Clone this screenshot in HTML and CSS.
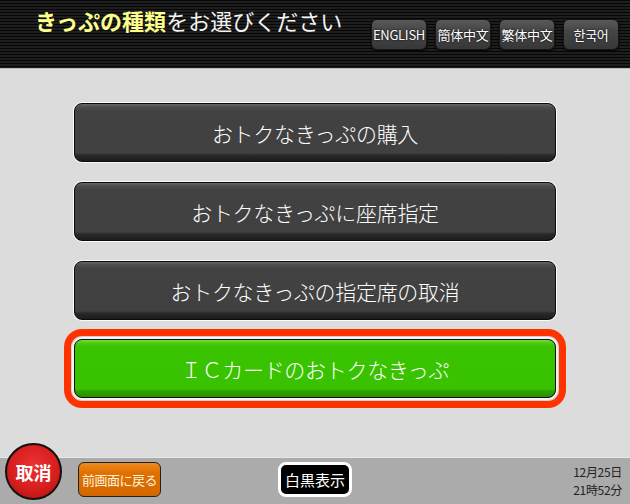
FILE: index.html
```html
<!DOCTYPE html>
<html lang="ja">
<head>
    <meta charset="UTF-8">
    <meta name="viewport" content="width=device-width, initial-scale=1.0">
    <title>きっぷの種類をお選びください</title>
    <link rel="stylesheet" href="styles.css">
</head>
<body>
    <div class="screen">
        <header class="header">
            <h1 class="title"><span class="title-em">きっぷの種類</span>をお選びください</h1>
            <div class="langs">
                <button class="lang">ENGLISH</button>
                <button class="lang">簡体中文</button>
                <button class="lang">繁体中文</button>
                <button class="lang">한국어</button>
            </div>
        </header>

        <main class="menu">
            <button class="menu-btn">おトクなきっぷの購入</button>
            <button class="menu-btn">おトクなきっぷに座席指定</button>
            <button class="menu-btn">おトクなきっぷの指定席の取消</button>
            <button class="menu-btn menu-btn-green">ＩＣカードのおトクなきっぷ</button>
        </main>

        <footer class="footbar">
            <div class="foot-left">
                <button class="cancel">取消</button>
                <button class="back">前画面に戻る</button>
            </div>
            <button class="mono">白黒表示</button>
            <div class="clock">
                <div>12月25日</div>
                <div>21時52分</div>
            </div>
        </footer>
    </div>
</body>
</html>
```

FILE: styles.css
```css
body {
    margin: 0;
    font-family: "Noto Sans CJK JP", "Noto Sans", sans-serif;
}
button {
    font-family: inherit;
    cursor: pointer;
    padding: 0;
}
.screen {
    width: 630px;
    height: 504px;
    display: flex;
    flex-direction: column;
    background: #dcdcdc;
    overflow: hidden;
}

/* header */
.header {
    height: 68px;
    flex: none;
    display: flex;
    justify-content: space-between;
    background: repeating-linear-gradient(180deg, #060606 0, #060606 1px, #1e1e1e 1px, #1e1e1e 3px);
    border-bottom: 1px solid #bcbcbc;
}
.title {
    margin: 8px 0 0 35px;
    font-size: 22px;
    line-height: 24px;
    font-weight: 400;
    color: #f4f4f4;
}
.title-em {
    color: #ffff8c;
    font-weight: 700;
}
.langs {
    display: flex;
    gap: 8px;
    align-items: center;
    padding-right: 11px;
}
.lang {
    width: 56px;
    height: 31px;
    border: 1px solid #151515;
    border-radius: 6px;
    background: linear-gradient(180deg, #5a5a5a 0, #444 40%, #383838 100%);
    box-shadow: 0 1px 2px #000;
    color: #fff;
    font-size: 13px;
    letter-spacing: -0.3px;
    text-shadow: 0 0 2px #000;
}

/* main menu */
.menu {
    flex: 1;
    display: flex;
    flex-direction: column;
    align-items: center;
    gap: 20px;
    padding-top: 34px;
}
.menu-btn {
    width: 482px;
    height: 59px;
    flex: none;
    border: 1px solid #0c0c0c;
    border-radius: 8px;
    box-shadow: 0 0 0 1px #fafafa;
    background: linear-gradient(180deg, #686868 0, #4c4c4c 3px, #424242 7px, #404040 calc(100% - 8px), #2a2a2a calc(100% - 6px), #1c1c1c 100%);
    color: #fff;
    font-size: 21px;
    font-weight: 300;
    letter-spacing: -0.3px;
}
.menu-btn-green {
    margin-top: -1px;
    background: linear-gradient(180deg, #78dc48 0, #4ccb12 3px, #3ac300 7px, #38c200 calc(100% - 8px), #2ea400 calc(100% - 6px), #279000 100%);
    box-shadow: 0 0 0 2px #f4f4f4, 0 0 0 3px #d2d2d2, 0 0 0 10px #ff3300;
}

/* bottom bar */
.footbar {
    height: 46px;
    flex: none;
    display: grid;
    grid-template-columns: 1fr auto 1fr;
    align-items: start;
    background: #ababab;
    border-top: 1px solid #e6e6e6;
}
.foot-left {
    display: flex;
    align-items: flex-start;
    gap: 16px;
    padding-left: 5px;
}
.cancel {
    width: 57px;
    height: 57px;
    margin-top: -15px;
    border: 2px solid #111;
    border-radius: 50%;
    background: radial-gradient(circle at 50% 40%, #ec3434 0, #d81e1e 55%, #a81010 100%);
    color: #fff;
    font-size: 18px;
    font-weight: 700;
}
.back {
    width: 83px;
    height: 35px;
    margin-top: 4px;
    border: 1px solid #222;
    border-radius: 6px;
    background: linear-gradient(180deg, #f08a20 0, #e07000 30%, #d46800 100%);
    color: #fff2dc;
    font-size: 13px;
    letter-spacing: -0.5px;
}
.mono {
    width: 74px;
    height: 35px;
    margin-top: 4px;
    border: 3px solid #fff;
    border-radius: 8px;
    background: #000;
    color: #fff;
    font-size: 15px;
}
.clock {
    justify-self: end;
    margin: 5px 8px 0 0;
    font-size: 12px;
    line-height: 18px;
    color: #222;
    text-align: right;
    letter-spacing: -0.3px;
}
```
